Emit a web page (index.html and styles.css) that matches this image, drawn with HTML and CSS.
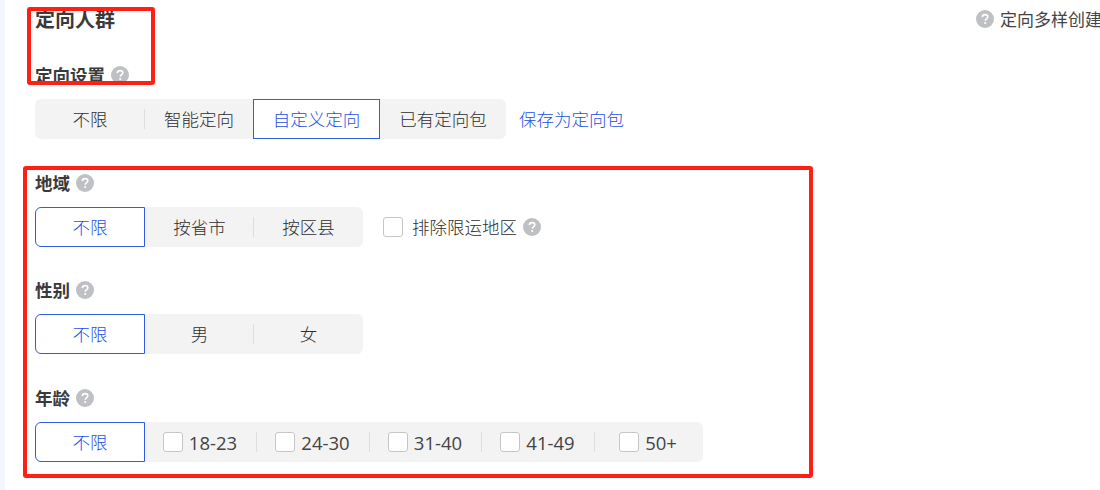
FILE: index.html
```html
<!DOCTYPE html>
<html lang="zh-CN">
<head>
<meta charset="utf-8">
<title>定向人群</title>
<link rel="stylesheet" href="styles.css">
</head>
<body>
<main class="page">
  <header class="head">
    <h1 class="title">定向人群</h1>
    <div class="hint"><svg class="help" viewBox="0 0 18 18"><use href="#q"/></svg><span>定向多样创建</span></div>
  </header>

  <div class="label label-first">定向设置<svg class="help" viewBox="0 0 18 18"><use href="#q"/></svg></div>
  <div class="controls">
    <div class="seg seg-a">
      <span class="opt o1 sep">不限</span>
      <span class="opt o2">智能定向</span>
      <span class="opt o3 on">自定义定向</span>
      <span class="opt o4">已有定向包</span>
    </div>
    <a class="save">保存为定向包</a>
  </div>

  <section class="group g-region">
    <div class="label">地域<svg class="help" viewBox="0 0 18 18"><use href="#q"/></svg></div>
    <div class="controls">
      <div class="seg">
        <span class="opt w110 on first">不限</span>
        <span class="opt w109 sep">按省市</span>
        <span class="opt w109">按区县</span>
      </div>
      <label class="exclude"><i class="box"></i><span class="exclude-text">排除限运地区</span><svg class="help" viewBox="0 0 18 18"><use href="#q"/></svg></label>
    </div>
  </section>

  <section class="group g-gender">
    <div class="label">性别<svg class="help" viewBox="0 0 18 18"><use href="#q"/></svg></div>
    <div class="controls">
      <div class="seg">
        <span class="opt w110 on first">不限</span>
        <span class="opt w109 sep">男</span>
        <span class="opt w109">女</span>
      </div>
    </div>
  </section>

  <section class="group g-age">
    <div class="label">年龄<svg class="help" viewBox="0 0 18 18"><use href="#q"/></svg></div>
    <div class="controls">
      <div class="seg">
        <span class="opt w110 on first">不限</span>
        <span class="opt age a1 sep"><i class="box"></i>18-23</span>
        <span class="opt age a2 sep"><i class="box"></i>24-30</span>
        <span class="opt age a3 sep"><i class="box"></i>31-40</span>
        <span class="opt age a4 sep"><i class="box"></i>41-49</span>
        <span class="opt age a5"><i class="box"></i>50+</span>
      </div>
    </div>
  </section>
</main>

<div class="mark mark-top"></div>
<div class="mark mark-main"></div>

<svg class="defs" aria-hidden="true">
  <symbol id="q" viewBox="0 0 18 18">
    <circle cx="9" cy="9" r="9" fill="#bfc0c4"/>
    <path d="M6.3 7.1C6.4 5.5 7.5 4.6 9.1 4.6c1.6 0 2.7.9 2.7 2.2 0 1-.5 1.5-1.4 2.1-.8.5-1.1.9-1.1 1.8" fill="none" stroke="#fff" stroke-width="1.6"/>
    <circle cx="9.2" cy="13" r="1.1" fill="#fff"/>
  </symbol>
</svg>
</body>
</html>
```

FILE: styles.css
```css
* { box-sizing: border-box; }
html, body { margin: 0; height: 490px; overflow: hidden; background: #fff; }
body {
  position: relative;
  width: 1100px;
  font-family: "Noto Sans CJK SC", "Noto Sans", sans-serif;
  color: #333;
  font-size: 16px;
}
.page {
  height: 490px;
  border-left: 5px solid #f4f6fd;
  padding: 7px 0 0 30px;
}
.head { display: flex; align-items: center; height: 24px; white-space: nowrap; }
.title { flex: 0 0 941px; margin: 0; font-size: 20px; line-height: 24px; font-weight: 700; color: #3a3a3a; }
.hint { display: flex; align-items: center; gap: 6px; font-size: 17px; line-height: 24px; margin-top: -1px; color: #444; }
.help { width: 18px; height: 18px; flex: none; display: block; }
.label { display: flex; align-items: center; gap: 6px; height: 22px; font-size: 17.5px; line-height: 22px; font-weight: 700; color: #3a3a3a; }
.label-first { margin-top: 33px; }
.controls { display: flex; align-items: center; margin-top: 13px; }
.g-region { margin-top: 33px; }
.g-gender { margin-top: 32px; }
.g-age { margin-top: 33px; }
.seg { display: flex; height: 40px; background: #f3f3f3; border-radius: 6px; }
.opt {
  position: relative;
  display: flex;
  align-items: center;
  justify-content: center;
  height: 40px;
  padding-bottom: 2px;
  font-size: 17.5px;
  font-weight: 300;
  color: #2e2e2e;
  white-space: nowrap;
}
.sep::after {
  content: "";
  position: absolute;
  right: 0;
  top: 10px;
  height: 20px;
  width: 1px;
  background: #dedede;
}
.on { background: #fff; border: 1px solid #2f5fe0; color: #1d4fe6; }
.first { border-radius: 6px 0 0 6px; }
.o1 { width: 110px; }
.o2 { width: 108px; }
.o3 { width: 127px; }
.o4 { width: 126px; }
.w110 { width: 110px; }
.w109 { width: 109px; }
.a1 { width: 112px; }
.a2 { width: 113px; }
.a3 { width: 112px; }
.a4 { width: 113px; }
.a5 { width: 108px; }
.box {
  flex: none;
  display: block;
  width: 20px;
  height: 20px;
  background: #fff;
  border: 1px solid #c6c6c6;
  border-radius: 3px;
  margin-right: 6px;
}
.age { padding: 0 2px 0 0; font-size: 18.5px; font-weight: 400; color: #444; font-family: "Open Sans", "Noto Sans CJK SC", sans-serif; }
.save { margin-left: 13px; padding-bottom: 2px; font-size: 17.5px; font-weight: 300; color: #1d4fe6; }
.exclude { display: flex; align-items: center; margin-left: 20px; font-size: 17.5px; font-weight: 300; color: #2e2e2e; }
.exclude .box { margin-right: 9px; }
.exclude-text { padding-bottom: 2px; }
.exclude .help { margin-left: 6px; }
.mark { position: absolute; border: 4px solid #ff1f14; border-radius: 3px; pointer-events: none; }
.mark-top { left: 27px; top: 7px; width: 128px; height: 78px; }
.mark-main { left: 23px; top: 166px; width: 790px; height: 312px; }
.defs { position: absolute; width: 0; height: 0; }
```
